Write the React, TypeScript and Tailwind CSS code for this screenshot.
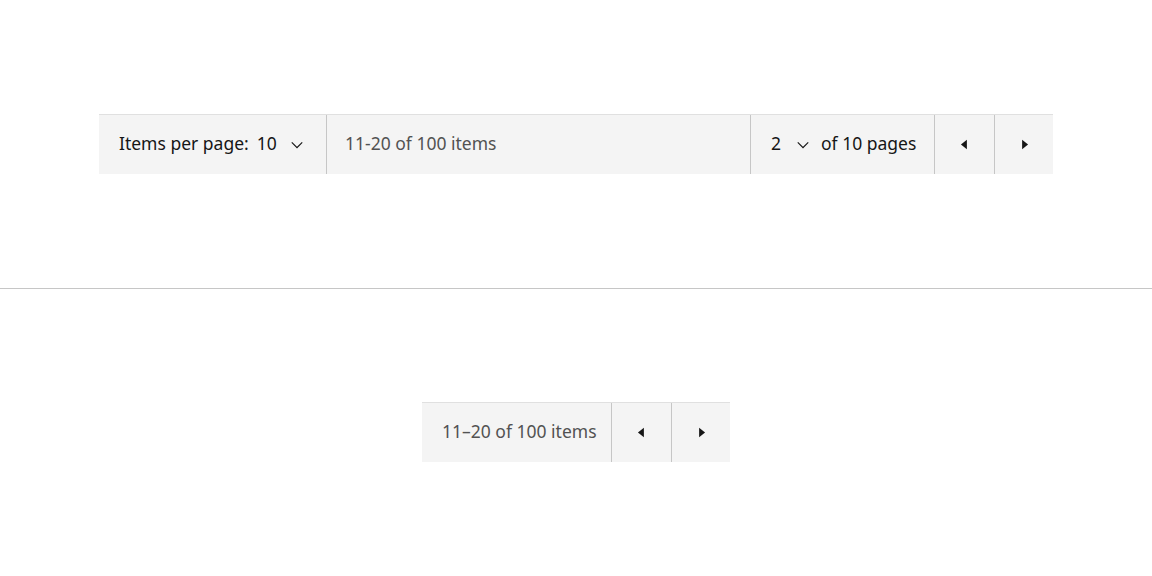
import React from 'react';

const ChevronDown = () => (
  <svg width="18" height="18" viewBox="0 0 16 16" fill="#161616" aria-hidden="true">
    <path d="M8 11L3 6l.7-.7L8 9.6l4.3-4.3.7.7z" />
  </svg>
);

const CaretLeft = () => (
  <svg width="19" height="19" viewBox="0 0 32 32" fill="#161616" aria-hidden="true">
    <polygon points="20 24 10 16 20 8" />
  </svg>
);

const CaretRight = () => (
  <svg width="19" height="19" viewBox="0 0 32 32" fill="#161616" aria-hidden="true">
    <polygon points="12 8 22 16 12 24" />
  </svg>
);

const NavButtons: React.FC = () => (
  <>
    <button className="w-[60px] h-full flex items-center justify-center border-l border-[#c6c6c6]">
      <CaretLeft />
    </button>
    <button className="w-[59px] h-full flex items-center justify-center border-l border-[#c6c6c6]">
      <CaretRight />
    </button>
  </>
);

const App: React.FC = () => {
  return (
    <div
      className="w-full h-[576px] bg-white flex flex-col text-[17.5px] text-[#161616]"
      style={{ fontFamily: '"Noto Sans", "Open Sans", sans-serif' }}
    >
      {/* Full pagination */}
      <div className="h-[288px] flex items-center justify-center">
        <div className="w-[954px] h-[60px] bg-[#f4f4f4] border-t border-[#e0e0e0] flex items-stretch">
          <div className="w-[228px] flex items-center pl-5 pb-0.5 border-r border-[#c6c6c6]">
            <span>Items per page:</span>
            <span className="ml-[8px]">10</span>
            <span className="ml-[11px] pt-0.5">
              <ChevronDown />
            </span>
          </div>
          <div className="flex-1 flex items-center pl-[18px] pb-0.5 text-[#525252]">11-20 of 100 items</div>
          <div className="w-[184px] flex items-center pl-5 pb-0.5 border-l border-[#c6c6c6]">
            <span>2</span>
            <span className="ml-[13px] pt-0.5">
              <ChevronDown />
            </span>
            <span className="ml-[9px]">of 10 pages</span>
          </div>
          <NavButtons />
        </div>
      </div>

      <div className="h-px bg-[#c6c6c6]" />

      {/* Compact pagination */}
      <div className="h-[286px] flex items-center justify-center">
        <div className="w-[308px] h-[60px] bg-[#f4f4f4] border-t border-[#e0e0e0] flex items-stretch">
          <div className="flex-1 flex items-center pl-5 pb-0.5 text-[#525252]">11–20 of 100 items</div>
          <NavButtons />
        </div>
      </div>
    </div>
  );
};

export default App;
